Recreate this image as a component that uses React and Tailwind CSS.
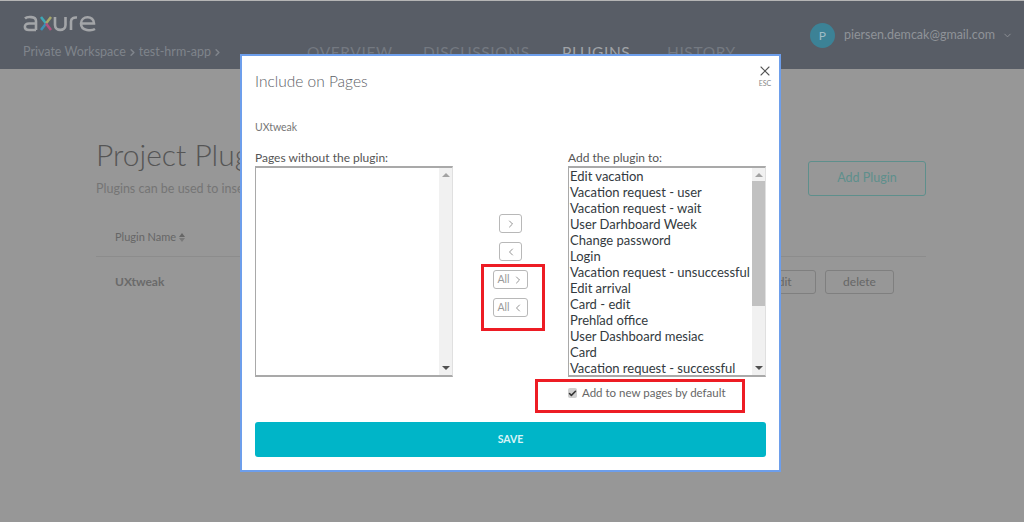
import React from 'react';
import { X, ChevronDown, ChevronRight, ChevronLeft, Check } from 'lucide-react';

const pages = [
  'Edit vacation',
  'Vacation request - user',
  'Vacation request - wait',
  'User Darhboard Week',
  'Change password',
  'Login',
  'Vacation request - unsuccessful',
  'Edit arrival',
  'Card - edit',
  'Prehľad office',
  'User Dashboard mesiac',
  'Card',
  'Vacation request - successful',
];

const font = { fontFamily: '"Lato", "Open Sans", sans-serif' };

/* Logo axure, dessiné en traits */
const Logo = () => (
  <svg width="75" height="20" viewBox="0 0 75 20" fill="none" strokeWidth="2.6" className="block">
    <path d="M2 5.5 C4 3.5 13 3 13 8 V17 M13 10.5 H6 C0.5 10.5 0.5 17 6 17 H13" stroke="#a3a5a8" />
    <path d="M18 4 L23 10.5" stroke="#3fa7b5" />
    <path d="M23 10.5 L28 4" stroke="#a5a76a" />
    <path d="M18 17 L23 10.5" stroke="#3c8fb5" />
    <path d="M23 10.5 L28 17" stroke="#b0527e" />
    <path d="M32 4 V12 C32 18.5 42.5 18.5 42.5 12 V4" stroke="#a3a5a8" />
    <path d="M48 17 V8.5 C48 5 51 4.2 54 4.5" stroke="#a3a5a8" />
    <path d="M72 16 C69 17.8 58 18.5 58 10.5 C58 2.5 71 2 71 10.5 H58" stroke="#a3a5a8" />
  </svg>
);

const ScrollArrows = ({ thumb }) => (
  <div className="relative w-[13px] shrink-0 bg-[#f1f1f1] flex flex-col justify-between items-center py-[5px]">
    <div className="w-0 h-0 border-x-[4px] border-x-transparent border-b-[4px] border-b-[#a3a3a3]" />
    {thumb && <div className="absolute left-0 top-[13px] w-full h-[125px] bg-[#c1c1c1]" />}
    <div className="w-0 h-0 border-x-[4px] border-x-transparent border-t-[4px] border-t-[#505050]" />
  </div>
);

const ListBox = ({ items = [] }) => (
  <div className="w-[198px] h-[211px] flex border border-[#a9a9a9] border-t-2 border-r-[#e0e0e0] border-b-2 bg-white overflow-hidden">
    <div className="flex-1 pl-[1px] text-[13px] leading-[16px] text-[#333a40] whitespace-nowrap overflow-hidden">
      {items.map((p) => (
        <div key={p} className="h-[16px]">{p}</div>
      ))}
    </div>
    <ScrollArrows thumb={items.length > 0} />
  </div>
);

const MoveButton = ({ children, wide }) => (
  <button className={`flex items-center justify-center gap-[2px] h-[19px] border border-[#b8b8b8] rounded-[3px] bg-white text-[10.5px] text-[#9a9a9a] ${wide ? 'w-[35px]' : 'w-[23px]'}`}>
    {children}
  </button>
);

export default function App() {
  return (
    <div style={font} className="relative w-[1024px] h-[522px] overflow-hidden bg-[#979797] border-t border-t-[#b5b5b5]">
      {/* Header */}
      <header className="h-[68px] bg-[#585d66] flex items-start">
        <div className="w-[284px] pl-[23px] pt-[12px]">
          <Logo />
          <div className="mt-[11px] flex items-center text-[12.5px] leading-[16px] text-[#7f848b]">
            Private Workspace
            <ChevronRight size={11} strokeWidth={3.5} className="mx-[1px]" />
            test-hrm-app
            <ChevronRight size={11} strokeWidth={3.5} className="mx-[1px]" />
          </div>
        </div>
        <nav className="flex pt-[41px] text-[15.5px] leading-[20px] tracking-[0.6px] text-[#747981]">
          <span className="ml-[23px] w-[116px]">OVERVIEW</span>
          <span className="w-[139px]">DISCUSSIONS</span>
          <span className="w-[105px] text-[#a0a3a7]">PLUGINS</span>
          <span>HISTORY</span>
        </nav>
        <div className="ml-auto flex items-center pt-[22px] pr-[11px] text-[12.5px] text-[#8f9398]">
          <div className="w-[25px] h-[25px] rounded-full bg-[#3c8296] flex items-center justify-center text-[12px] text-[#9fbdc6]">P</div>
          <span className="ml-[9px]">piersen.demcak@gmail.com</span>
          <ChevronDown size={11} strokeWidth={2} className="ml-[7px]" />
        </div>
      </header>

      {/* Page derrière le modal */}
      <main className="pl-[96px] pr-[98px]">
        <div className="flex justify-between">
          <div className="pt-[67px]">
            <h1 className="text-[30px] leading-[36px] font-light text-[#555]">Project Plugins</h1>
            <p className="mt-[9px] text-[12.5px] leading-[16px] text-[#757575] whitespace-nowrap">Plugins can be used to insert HTML</p>
          </div>
          <button className="mt-[92px] w-[118px] h-[35px] border border-[#5e8f8c] rounded-[3px] text-[12.5px] text-[#5e8f8c]">Add Plugin</button>
        </div>
        <div className="mt-[30px] h-[20px] pl-[19px] flex items-center gap-[3px] text-[11px] text-[#666]">
          Plugin Name
          <div className="flex flex-col gap-[1px]">
            <div className="w-0 h-0 border-x-[3px] border-x-transparent border-b-[4px] border-b-[#666]" />
            <div className="w-0 h-0 border-x-[3px] border-x-transparent border-t-[4px] border-t-[#7a7a7a]" />
          </div>
        </div>
        <div className="mt-[9px] pt-[13px] border-t border-t-[#8c8c8c] flex items-center justify-between">
          <span className="pl-[19px] text-[12px] font-bold text-[#6a6a6a]">UXtweak</span>
          <div className="flex gap-[9px] pr-[32px] text-[12px] text-[#666]">
            <button className="w-[69px] h-[24px] border border-[#7f7f7f] rounded-[3px]">edit</button>
            <button className="w-[69px] h-[24px] border border-[#7f7f7f] rounded-[3px]">delete</button>
          </div>
        </div>
      </main>

      {/* Modal */}
      <div className="absolute left-[240px] top-[53px] w-[541px] h-[418px] bg-white border-2 border-[#6d9eeb] px-[13px] flex flex-col">
        <div className="flex justify-between">
          <h2 className="pt-[15px] text-[15.5px] leading-[20px] font-light text-[#5c6066]">Include on Pages</h2>
          <div className="pt-[7px] -mr-[7px] flex flex-col items-center text-[#555]">
            <X size={16} strokeWidth={1.6} />
            <span className="text-[7px] leading-[8px] text-[#888]">ESC</span>
          </div>
        </div>
        <div className="mt-[29px] text-[10.5px] leading-[14px] text-[#777]">UXtweak</div>
        <div className="mt-[16px] flex items-start">
          <div>
            <div className="text-[12px] leading-[16px] h-[16px] text-[#555]">Pages without the plugin:</div>
            <ListBox />
          </div>
          <div className="w-[115px] pt-[64px] flex flex-col items-center gap-[9px]">
            <MoveButton><ChevronRight size={12} strokeWidth={1.6} className="text-[#777]" /></MoveButton>
            <MoveButton><ChevronLeft size={12} strokeWidth={1.6} className="text-[#777]" /></MoveButton>
            <MoveButton wide>All<ChevronRight size={12} strokeWidth={1.6} className="text-[#777]" /></MoveButton>
            <MoveButton wide>All<ChevronLeft size={12} strokeWidth={1.6} className="text-[#777]" /></MoveButton>
          </div>
          <div>
            <div className="text-[12px] leading-[16px] h-[16px] text-[#555]">Add the plugin to:</div>
            <ListBox items={pages} />
            <div className="mt-[9px] flex items-center gap-[5px] text-[11.5px] leading-[14px] text-[#666]">
              <div className="w-[9px] h-[10px] rounded-[2px] bg-[#cfcfcf] flex items-center justify-center">
                <Check size={9} strokeWidth={4} className="text-[#333]" />
              </div>
              Add to new pages by default
            </div>
          </div>
        </div>
        <button className="mt-[22px] h-[35px] w-[511px] rounded-[3px] bg-[#00b5c8] text-[10.5px] font-bold text-[#d8f4f7]">SAVE</button>
      </div>

      {/* Annotations rouges */}
      <div className="absolute left-[481px] top-[263px] w-[64px] h-[67px] border-[3px] border-[#ed1c24]" />
      <div className="absolute left-[535px] top-[378px] w-[210px] h-[34px] border-[3px] border-[#ed1c24]" />
    </div>
  );
}
